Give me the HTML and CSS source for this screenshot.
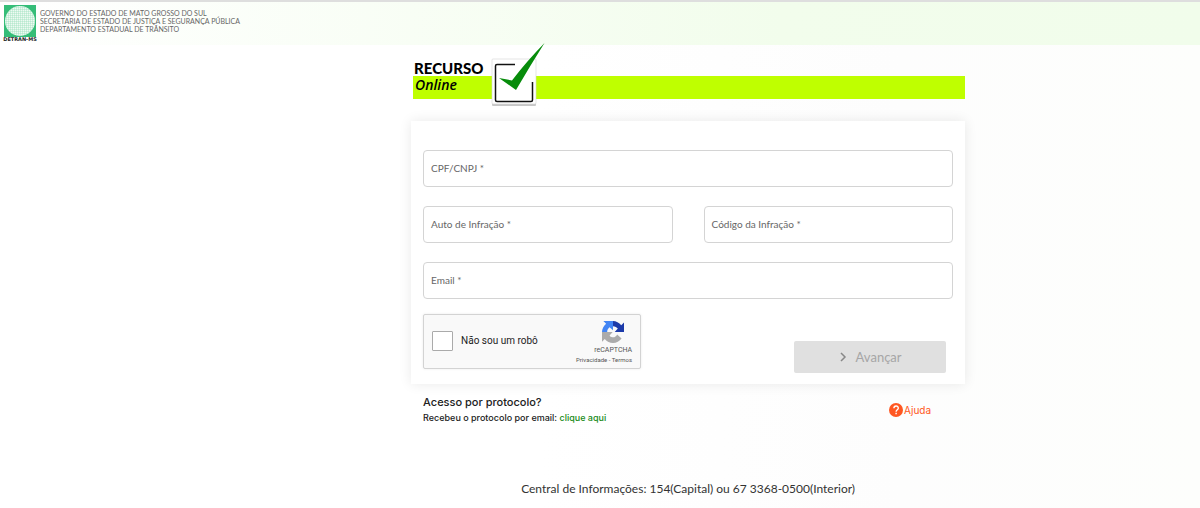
FILE: index.html
```html
<!DOCTYPE html>
<html lang="pt-BR">
<head>
<meta charset="utf-8">
<meta name="viewport" content="width=device-width, initial-scale=1">
<title>Recurso Online - DETRAN-MS</title>
<link rel="stylesheet" href="styles.css">
</head>
<body>
<header class="topbar">
  <div class="agency">
    <svg class="agency-logo" viewBox="0 0 32 32" aria-hidden="true">
      <defs>
        <pattern id="mesh" width="2" height="2" patternUnits="userSpaceOnUse">
          <path d="M0 0H2M0 0V2" stroke="#8fdcb4" stroke-width="0.7"/>
        </pattern>
      </defs>
      <rect width="32" height="32" fill="#35bd78"/>
      <circle cx="16" cy="16" r="15" fill="#eefaf3"/>
      <circle cx="16" cy="16" r="15" fill="url(#mesh)"/>
    </svg>
    <span class="agency-name">DETRAN-MS</span>
  </div>
  <p class="government">GOVERNO DO ESTADO DE MATO GROSSO DO SUL<br>SECRETARIA DE ESTADO DE JUSTIÇA E SEGURANÇA PÚBLICA<br>DEPARTAMENTO ESTADUAL DE TRÂNSITO</p>
</header>
<main class="page">
  <div class="content">
    <h1 class="brand">
      <span class="brand-title">RECURSO</span>
      <span class="brand-sub">Online</span>
      <svg class="brand-check" viewBox="0 0 56 66" aria-hidden="true">
        <rect x="2" y="18" width="44" height="46" rx="1" fill="#999" opacity=".55"/>
        <rect x="2" y="17" width="44" height="45" rx="1" fill="#fff" stroke="#d5d5d5" stroke-width=".6"/>
        <path d="M25 22.500H7Q5.500 22.500 5.500 24V58Q5.500 59.500 7 59.500H41Q42.500 59.500 42.500 58V40" fill="none" stroke="#111" stroke-width="1.500"/>
        <path d="M9 36L22 38.500Q36 20 54.500 1Q40 24 26 48Z" fill="#078c0b"/>
      </svg>
    </h1>
    <form class="card">
      <div class="field"><label for="cpf">CPF/CNPJ *</label><input id="cpf" type="text" required></div>
      <div class="pair">
        <div class="field"><label for="auto">Auto de Infração *</label><input id="auto" type="text" required></div>
        <div class="field"><label for="codigo">Código da Infração *</label><input id="codigo" type="text" required></div>
      </div>
      <div class="field"><label for="email">Email *</label><input id="email" type="email" required></div>
      <div class="actions">
        <div class="captcha">
          <input class="captcha-box" id="robo" type="checkbox">
          <label class="captcha-label" for="robo">Não sou um robô</label>
          <div class="captcha-brand">
            <svg class="captcha-logo" viewBox="0 0 64 64" aria-hidden="true">
              <path fill="#1c3aa9" d="M64 32V4l-8 8C50 5 41 0 32 0v15c6 0 11 3 14 7l-9 10z"/>
              <path fill="#4285f4" d="M32 0H4l8 8C5 14 0 23 0 32h15c0-6 3-11 7-14l10 9z"/>
              <path fill="#ababab" d="M0 32v28l8-8c6 7 15 12 24 12 10 0 19-5 25-13L44 39c-3 6-8 9-14 8-4 0-6-2-8-5l9-10z"/>
            </svg>
            <span class="captcha-name">reCAPTCHA</span>
            <span class="captcha-links"><a href="#privacidade">Privacidade</a> - <a href="#termos">Termos</a></span>
          </div>
        </div>
        <button class="next" type="submit" disabled>
          <svg class="next-icon" viewBox="0 0 8 10" aria-hidden="true"><path d="M2 1L6 5L2 9" fill="none" stroke="currentColor" stroke-width="1.500"/></svg>
          Avançar
        </button>
      </div>
    </form>
    <section class="below">
      <div>
        <h2 class="protocol-title">Acesso por protocolo?</h2>
        <p class="protocol-text">Recebeu o protocolo por email: <a href="#protocolo">clique aqui</a></p>
      </div>
      <a class="help" href="#ajuda">
        <svg class="help-icon" viewBox="0 0 14 14" aria-hidden="true">
          <circle cx="7" cy="7" r="7" fill="#ff5722"/>
          <path d="M4.900 5.300C4.900 2.300 9.300 2.300 9.300 5.200C9.300 6.800 7.100 6.900 7.100 8.800M7.100 9.800V11.200" fill="none" stroke="#fff" stroke-width="1.400"/>
        </svg>
        Ajuda
      </a>
    </section>
    <footer class="info">Central de Informações: 154(Capital) ou 67 3368-0500(Interior)</footer>
  </div>
</main>
</body>
</html>
```
FILE: styles.css
```css
* { box-sizing: border-box; }

body {
  margin: 0;
  min-height: 100vh;
  font-family: Lato, "Liberation Sans", sans-serif;
  color: #212121;
  background: linear-gradient(90deg, #fff 45%, #fdfdfd 75%, #fdfefc 100%);
}

h1, h2, p { margin: 0; }
a { text-decoration: none; }

.topbar {
  display: flex;
  gap: 4px;
  height: 45px;
  padding: 3px 4px 0;
  border-top: 2px solid #dedede;
  background: linear-gradient(90deg, #fff 0%, #f2fdec 65%, #f1fdeb 100%);
}

.agency {
  display: flex;
  flex-direction: column;
  align-items: center;
  flex: none;
  width: 32px;
}

.agency-logo { flex: none; width: 32px; height: 32px; }

.agency-name {
  font: 900 5px/5px "DejaVu Sans", sans-serif;
  white-space: nowrap;
  color: #222;
}

.government {
  padding-top: 4px;
  font-size: 7px;
  line-height: 8px;
  color: #666;
}

.page {
  display: grid;
  grid-template-columns: minmax(0, 7fr) minmax(0, 554px) minmax(0, 4fr);
}

.content { grid-column: 2; }

.brand {
  position: relative;
  margin: 16px 0 22px 2px;
  color: #000;
}

.brand-title {
  display: block;
  padding-left: 1px;
  font-size: 15px;
  font-weight: 900;
  line-height: 15px;
}

.brand-sub {
  display: block;
  height: 23px;
  padding-left: 2px;
  background: #bfff00;
  font: italic 600 14px/18px "Open Sans", sans-serif;
}

.brand-check {
  position: absolute;
  left: 77px;
  bottom: -9px;
  width: 56px;
  height: 66px;
}

.card {
  display: flex;
  flex-direction: column;
  gap: 19px;
  padding: 29px 12px 11px;
  background: #fff;
  box-shadow: 0 0 12px rgba(0, 0, 0, 0.09);
}

.field { display: grid; }

.field label, .field input { grid-area: 1 / 1; }

.field label {
  z-index: 1;
  align-self: center;
  padding: 0 0 2px 8px;
  font-size: 10px;
  color: #666;
  pointer-events: none;
}

.field input {
  width: 100%;
  height: 37px;
  padding: 0 8px;
  border: 1px solid #d4d4d4;
  border-radius: 4px;
  background: transparent;
  font: inherit;
}

.pair {
  display: grid;
  grid-template-columns: 1fr 1fr;
  gap: 31px;
}

.actions {
  display: flex;
  justify-content: space-between;
  align-items: flex-start;
  margin-top: -4px;
}

.captcha {
  display: flex;
  align-items: center;
  width: 218px;
  height: 55px;
  padding: 0 8px;
  border: 1px solid #d3d3d3;
  border-radius: 2px;
  background: #f9f9f9;
  box-shadow: 0 0 3px rgba(0, 0, 0, 0.08);
  font-family: Roboto, sans-serif;
}

.captcha-box {
  appearance: none;
  width: 21px;
  height: 20px;
  margin: 0 8px 2px 0;
  border: 1px solid #aaa;
  border-radius: 1px;
  background: #fff;
}

.captcha-label { padding-bottom: 2px; font-size: 10px; color: #222; }

.captcha-brand {
  display: flex;
  flex-direction: column;
  align-items: flex-end;
  margin-left: auto;
  padding-top: 2px;
  color: #555;
}

.captcha-logo { width: 22px; height: 22px; margin-right: 8px; }
.captcha-name { margin-top: 3px; font-size: 7px; line-height: 9px; }
.captcha-links { font-size: 6px; line-height: 9px; }
.captcha-links a { color: inherit; }

.next {
  display: flex;
  justify-content: center;
  align-items: center;
  gap: 9px;
  width: 152px;
  height: 32px;
  margin: 27px 7px 0 0;
  border: 0;
  border-radius: 2px;
  background: #e0e0e0;
  color: #a6a6a6;
  font: 13px Lato, sans-serif;
}

.next-icon { width: 8px; height: 10px; color: #888; }

.below {
  display: flex;
  justify-content: space-between;
  padding: 11px 34px 0 12px;
}

.protocol-title { font: 500 11px/15px Inter, sans-serif; }
.protocol-text { font: 500 9px/15px Inter, sans-serif; }
.protocol-text a { color: #168a16; }

.help {
  display: flex;
  align-items: center;
  gap: 1px;
  color: #ff5722;
  font: 10px/14px Inter, sans-serif;
}

.help-icon { width: 14px; height: 14px; }

.info {
  padding: 56px 0 8px;
  font-size: 12px;
  line-height: 16px;
  text-align: center;
  color: #333;
}
```
